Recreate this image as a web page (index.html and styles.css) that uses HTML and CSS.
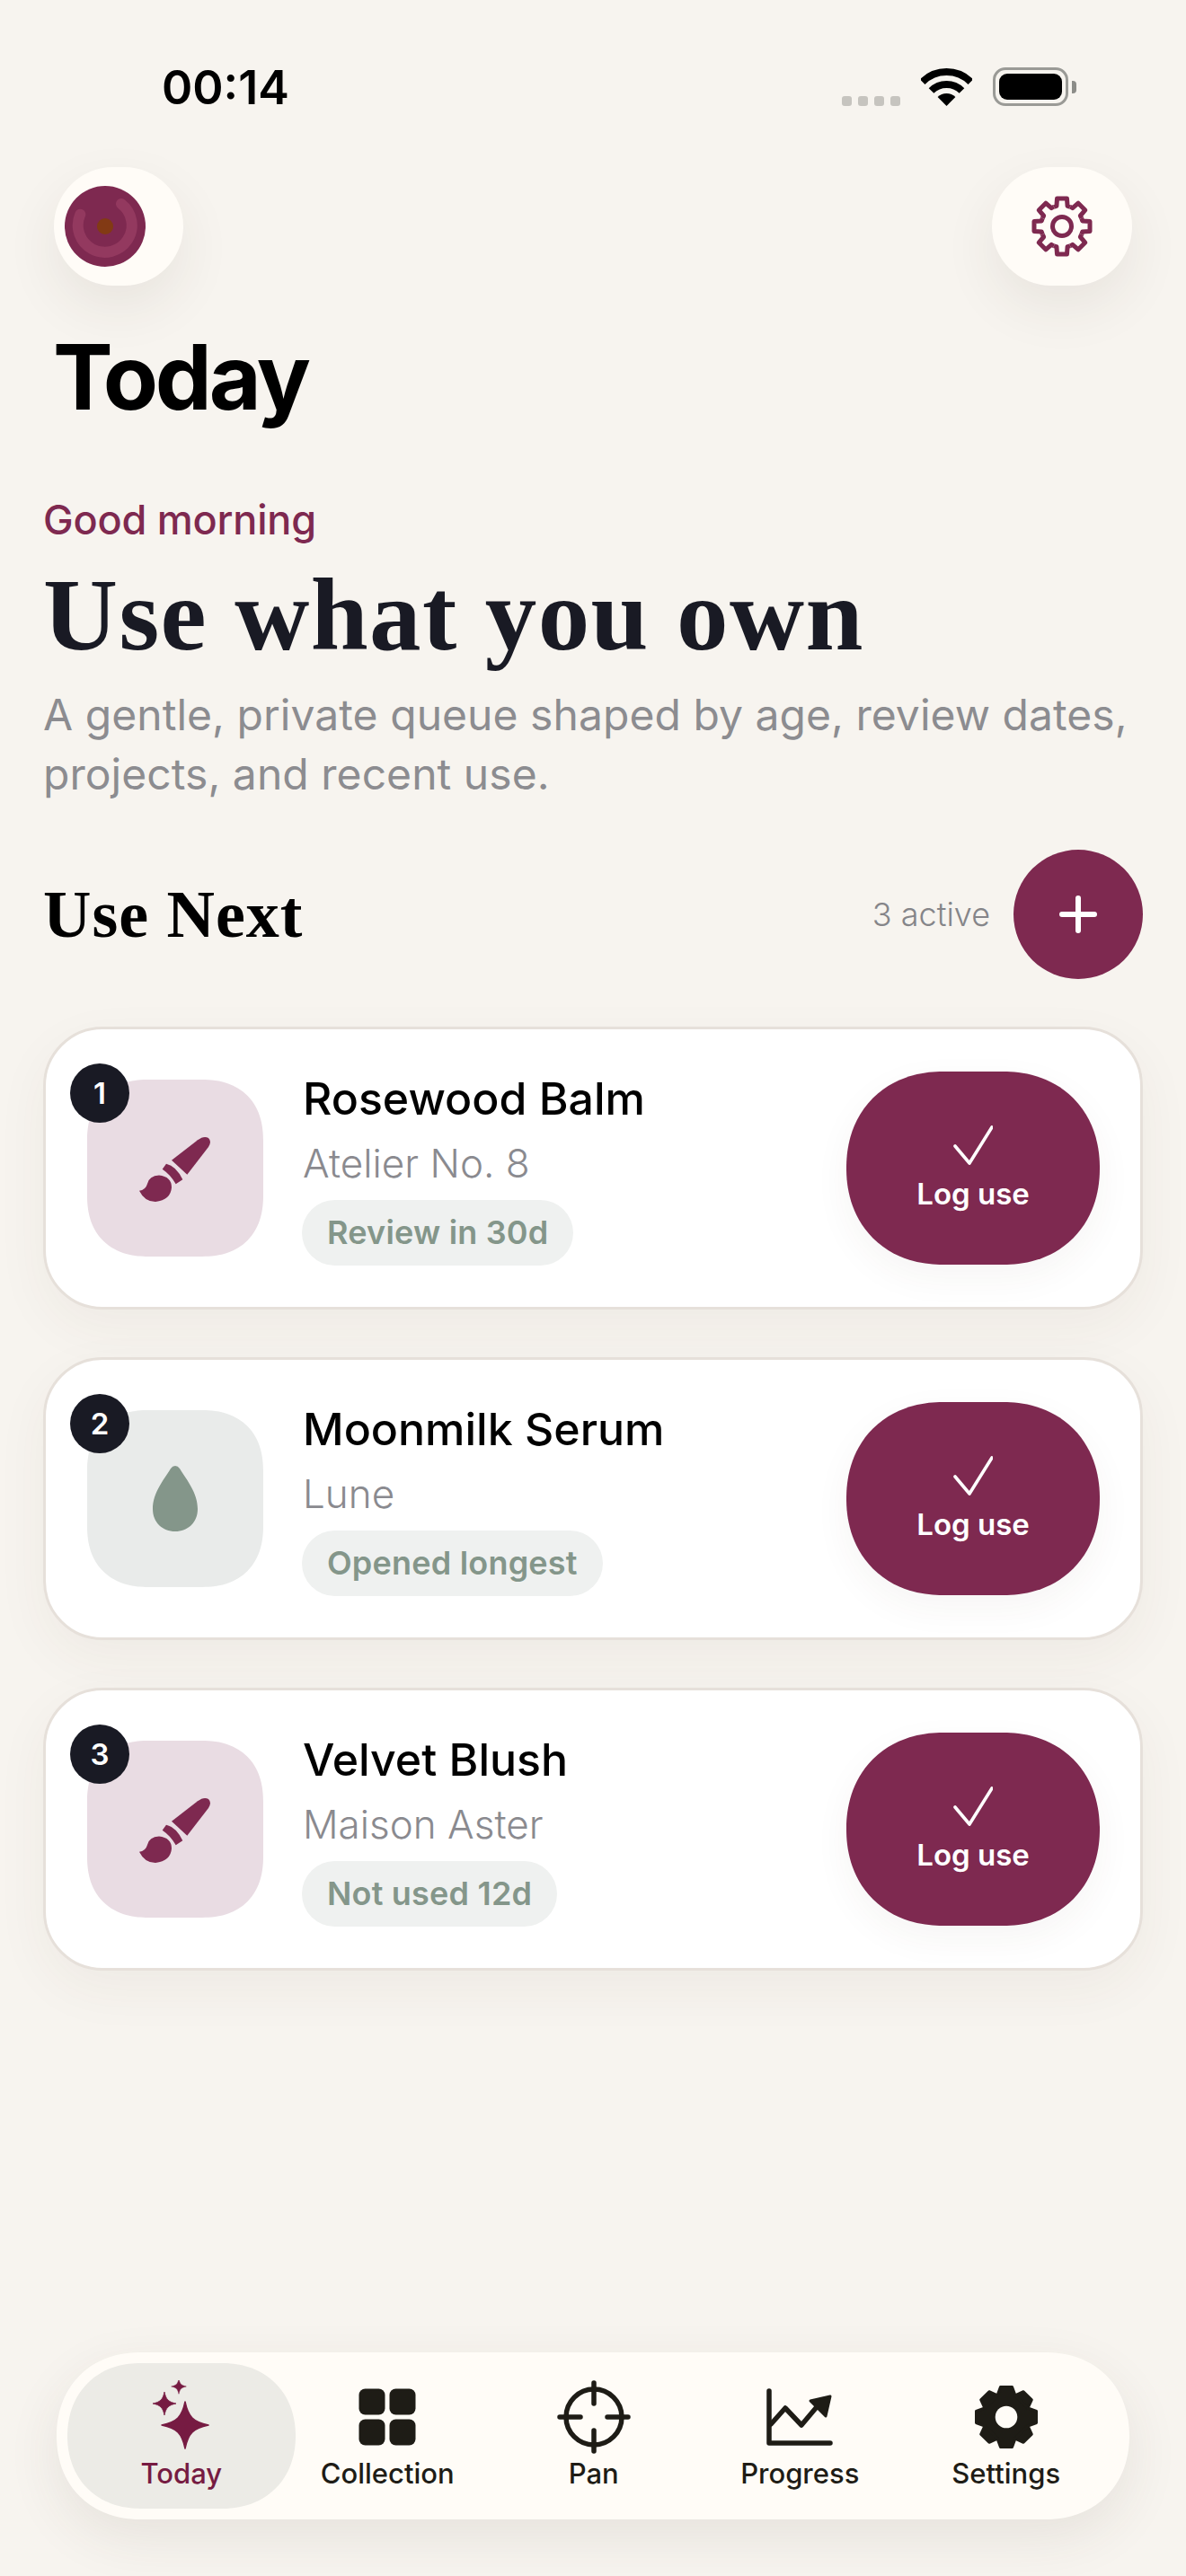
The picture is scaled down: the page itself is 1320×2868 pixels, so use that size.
FILE: index.html
```html
<!DOCTYPE html>
<html lang="en">
  <head>
    <meta charset="UTF-8" />
    <meta name="viewport" content="width=device-width, initial-scale=1.0" />
    <title>Today</title>
    <link rel="stylesheet" href="styles.css">
  </head>
  <body>
    <svg class="defs" width="0" height="0" aria-hidden="true">
      <defs>
        <path id="gear-seg" d="M-8.99-21.71A23.5 23.5 0 0 1-6.08-22.7L-5.47-31.02L5.47-31.02L6.08-22.7A23.5 23.5 0 0 1 8.99-21.71" />
        <path id="gear-tooth" d="M-10-24L-6.5-33.5L6.5-33.5L10-24Z" />
        <g id="brush">
          <path d="M61 61.7L90 39.3Q97 34 102 37Q106 41 102 47L78.3 77.7Z" />
          <path d="M50.7 71.7L55 65.7Q66 68 73.3 83.3L65.7 88.3Q60 78 50.7 71.7Z" />
          <path d="M25 95.7Q32 95 34 88Q36 79 47 78.5Q61 80 61 92Q60 106 43 108Q31 108 25 95.7Z" />
        </g>
        <path id="star" d="M0-26C3.5-9 9-3.5 26 0C9 3.5 3.5 9 0 26C-3.5 9-9 3.5-26 0C-9-3.5-3.5-9 0-26Z" />
      </defs>
    </svg>

    <div class="statusbar">
      <span class="time">00:14</span>
      <div class="status-icons">
        <div class="signal"><i></i><i></i><i></i><i></i></div>
        <svg class="wifi" viewBox="0 0 57 42" width="57" height="42">
          <path d="M1.63 15.13A38 38 0 0 1 55.37 15.13" fill="none" stroke="#000" stroke-width="8" />
          <path d="M11.53 25.03A24 24 0 0 1 45.47 25.03" fill="none" stroke="#000" stroke-width="8" />
          <path d="M28.5 42L18.6 32.1A14 14 0 0 1 38.4 32.1Z" fill="#000" />
        </svg>
        <div class="battery"><div class="battery-fill"></div></div>
        <div class="battery-nub"></div>
      </div>
    </div>

    <div class="topbar">
      <button class="round-btn avatar-btn" aria-label="Profile">
        <svg viewBox="0 0 90 90" width="90" height="90">
          <circle cx="45" cy="45" r="45" fill="#7e2950" />
          <path d="M17.3 31.7A30 30 0 1 0 63 20" fill="none" stroke="#93395f" stroke-width="12" stroke-linecap="round" />
          <circle cx="45" cy="45" r="9" fill="#823a14" />
        </svg>
      </button>
      <button class="round-btn settings-btn" aria-label="Settings">
        <svg class="gear-line" viewBox="-34 -34 68 68" width="68" height="68">
          <use href="#gear-seg" />
          <use href="#gear-seg" transform="rotate(45)" />
          <use href="#gear-seg" transform="rotate(90)" />
          <use href="#gear-seg" transform="rotate(135)" />
          <use href="#gear-seg" transform="rotate(180)" />
          <use href="#gear-seg" transform="rotate(225)" />
          <use href="#gear-seg" transform="rotate(270)" />
          <use href="#gear-seg" transform="rotate(315)" />
          <circle r="10.5" />
        </svg>
      </button>
    </div>

    <h1 class="page-title">Today</h1>

    <section class="hero">
      <p class="greeting">Good morning</p>
      <h2 class="headline">Use what you own</h2>
      <p class="subtext">A gentle, private queue shaped by age, review dates, projects, and recent use.</p>
    </section>

    <div class="section-head">
      <h3 class="section-title">Use Next</h3>
      <div class="section-side">
        <span class="count">3 active</span>
        <button class="add-btn" aria-label="Add">
          <svg viewBox="0 0 42 42" width="42" height="42">
            <path d="M21 3V39M3 21H39" fill="none" stroke="#fff" stroke-width="6" stroke-linecap="round" />
          </svg>
        </button>
      </div>
    </div>

    <div class="cards">
      <article class="card">
        <div class="tile tile-rose">
          <span class="rank">1</span>
          <svg viewBox="24 33 82 76" width="82" height="76"><use href="#brush" /></svg>
        </div>
        <div class="info">
          <div class="name">Rosewood Balm</div>
          <div class="brand">Atelier No. 8</div>
          <span class="chip">Review in 30d</span>
        </div>
        <button class="log-btn">
          <svg viewBox="0 0 44 44" width="44" height="44">
            <path d="M2 23L18 42L43 2" fill="none" stroke="#fff" stroke-width="3.6" stroke-linecap="round" stroke-linejoin="round" />
          </svg>
          <span>Log use</span>
        </button>
      </article>

      <article class="card">
        <div class="tile tile-sage">
          <span class="rank">2</span>
          <svg viewBox="0 0 50 73" width="50" height="73">
            <path d="M25 0Q28 0 30 3C38 16 50 30 50 48C50 63 39 73 25 73C11 73 0 63 0 48C0 30 12 16 20 3Q22 0 25 0Z" fill="#84968a" />
          </svg>
        </div>
        <div class="info">
          <div class="name">Moonmilk Serum</div>
          <div class="brand">Lune</div>
          <span class="chip">Opened longest</span>
        </div>
        <button class="log-btn">
          <svg viewBox="0 0 44 44" width="44" height="44">
            <path d="M2 23L18 42L43 2" fill="none" stroke="#fff" stroke-width="3.6" stroke-linecap="round" stroke-linejoin="round" />
          </svg>
          <span>Log use</span>
        </button>
      </article>

      <article class="card">
        <div class="tile tile-rose">
          <span class="rank">3</span>
          <svg viewBox="24 33 82 76" width="82" height="76"><use href="#brush" /></svg>
        </div>
        <div class="info">
          <div class="name">Velvet Blush</div>
          <div class="brand">Maison Aster</div>
          <span class="chip">Not used 12d</span>
        </div>
        <button class="log-btn">
          <svg viewBox="0 0 44 44" width="44" height="44">
            <path d="M2 23L18 42L43 2" fill="none" stroke="#fff" stroke-width="3.6" stroke-linecap="round" stroke-linejoin="round" />
          </svg>
          <span>Log use</span>
        </button>
      </article>
    </div>

    <nav class="tabbar">
      <a class="tab active">
        <svg class="tab-icon" viewBox="0 0 82 82" width="82" height="82" fill="#761b42" stroke="#761b42" stroke-width="1.5" stroke-linejoin="round">
          <use href="#star" transform="translate(45 50)" />
          <use href="#star" transform="translate(22 26) scale(.5)" />
          <use href="#star" transform="translate(38 7) scale(.32)" />
        </svg>
        <span>Today</span>
      </a>
      <a class="tab">
        <svg class="tab-icon" viewBox="0 0 82 82" width="82" height="82" fill="#1e1c16">
          <rect x="9.5" y="9.5" width="29" height="29" rx="7" />
          <rect x="43.5" y="9.5" width="29" height="29" rx="7" />
          <rect x="9.5" y="43.5" width="29" height="29" rx="7" />
          <rect x="43.5" y="43.5" width="29" height="29" rx="7" />
        </svg>
        <span>Collection</span>
      </a>
      <a class="tab">
        <svg class="tab-icon" viewBox="0 0 82 82" width="82" height="82" fill="none" stroke="#1e1c16" stroke-width="5.5" stroke-linecap="round">
          <circle cx="41" cy="41" r="31" />
          <path d="M41 3V26M41 56V79M3 41H26M56 41H79" />
        </svg>
        <span>Pan</span>
      </a>
      <a class="tab">
        <svg class="tab-icon" viewBox="-4 -9 82 82" width="82" height="82" fill="none" stroke="#1e1c16" stroke-width="5.5" stroke-linecap="round" stroke-linejoin="round">
          <path d="M3 3V61H71" />
          <path d="M5 40L21 22L39 41L55 22" />
          <path d="M49 14L71 9L66 31Z" fill="#1e1c16" stroke-width="3" />
        </svg>
        <span>Progress</span>
      </a>
      <a class="tab">
        <svg class="tab-icon" viewBox="-41 -41 82 82" width="82" height="82" fill="#1e1c16" stroke="#1e1c16" stroke-width="3" stroke-linejoin="round">
          <circle r="26" />
          <use href="#gear-tooth" />
          <use href="#gear-tooth" transform="rotate(45)" />
          <use href="#gear-tooth" transform="rotate(90)" />
          <use href="#gear-tooth" transform="rotate(135)" />
          <use href="#gear-tooth" transform="rotate(180)" />
          <use href="#gear-tooth" transform="rotate(225)" />
          <use href="#gear-tooth" transform="rotate(270)" />
          <use href="#gear-tooth" transform="rotate(315)" />
          <circle r="12.3" fill="#fffcf7" stroke="none" />
        </svg>
        <span>Settings</span>
      </a>
    </nav>
  </body>
</html>
```

FILE: styles.css
```css
* {
  box-sizing: border-box;
}
body {
  margin: 0;
  min-height: 2868px;
  display: flex;
  flex-direction: column;
  background-color: #f7f4ef;
  color: #000;
  font-family: Inter, "Liberation Sans", sans-serif;
}
button {
  border: none;
  padding: 0;
  font-family: inherit;
}
.defs {
  position: absolute;
}

/* status bar */
.statusbar {
  display: flex;
  justify-content: space-between;
  align-items: flex-end;
  padding: 72px 122px 0 180px;
}
.time {
  font-size: 52px;
  line-height: 52px;
  font-weight: 600;
}
.status-icons {
  display: flex;
  align-items: flex-end;
  margin-bottom: 6px;
}
.signal {
  display: flex;
  gap: 7px;
  margin-right: 23px;
}
.signal i {
  width: 11px;
  height: 11px;
  border-radius: 3px;
  background-color: #c6c4bf;
}
.wifi {
  margin-right: 23px;
}
.battery {
  width: 84px;
  height: 43px;
  padding: 4px;
  border: 3px solid #9a9a96;
  border-radius: 14px;
}
.battery-fill {
  height: 100%;
  background-color: #000;
  border-radius: 9px;
}
.battery-nub {
  width: 5px;
  height: 14px;
  margin: 0 0 14px 4px;
  background-color: #8c8c88;
  border-radius: 0 4px 4px 0;
}

/* top buttons */
.topbar {
  display: flex;
  justify-content: space-between;
  padding: 0 60px;
  margin-top: 62px;
}
.round-btn {
  height: 132px;
  display: flex;
  align-items: center;
  background-color: #fffcf7;
  border-radius: 66px;
  box-shadow: 0 24px 60px rgba(70, 55, 40, 0.08);
}
.avatar-btn {
  width: 144px;
  padding-left: 12px;
}
.settings-btn {
  width: 156px;
  justify-content: center;
}
.gear-line {
  fill: none;
  stroke: #7e2950;
  stroke-width: 5;
  stroke-linejoin: round;
}

.page-title {
  margin: 52px 0 0 59px;
  font-size: 100px;
  line-height: 100px;
  font-weight: 700;
  letter-spacing: -3.2px;
}

/* intro */
.hero {
  padding: 0 48px;
  margin-top: 81px;
}
.greeting {
  margin: 0;
  font-size: 45px;
  line-height: 56px;
  font-weight: 500;
  letter-spacing: -0.2px;
  color: #7e2950;
}
.headline {
  margin: 18px 0 0;
  font-family: "Liberation Serif", serif;
  font-size: 115px;
  line-height: 120px;
  font-weight: 700;
  letter-spacing: 1.4px;
  color: #191a24;
}
.subtext {
  margin: 18px 0 0;
  font-size: 48px;
  line-height: 66px;
  font-weight: 380;
  letter-spacing: 0.05px;
  color: #8c8c90;
}

.section-head {
  display: flex;
  justify-content: space-between;
  align-items: center;
  padding: 0 48px 0 48px;
  margin-top: 51px;
}
.section-title {
  margin: 0;
  font-family: "Liberation Serif", serif;
  font-size: 74px;
  line-height: 80px;
  font-weight: 700;
  letter-spacing: 1px;
}
.section-side {
  display: flex;
  align-items: center;
  gap: 26px;
}
.count {
  font-size: 36px;
  font-weight: 300;
  color: #858589;
}
.add-btn {
  width: 144px;
  height: 144px;
  display: flex;
  align-items: center;
  justify-content: center;
  background-color: #7e2950;
  border-radius: 50%;
}

/* cards */
.cards {
  display: flex;
  flex-direction: column;
  gap: 53px;
  margin: 53px 48px 0;
}
.card {
  height: 315px;
  display: flex;
  align-items: center;
  padding: 0 45px 0 46px;
  background-color: #fff;
  border: 3px solid #e6e0da;
  border-radius: 66px;
  box-shadow: 0 20px 60px rgba(70, 55, 40, 0.05);
}
.tile {
  position: relative;
  flex: none;
  width: 196px;
  height: 197px;
  display: flex;
  align-items: center;
  justify-content: center;
  border-radius: 68px;
  corner-shape: superellipse(1.2);
}
.tile-rose {
  background-color: #e9dce3;
  fill: #7e2950;
}
.tile-sage {
  background-color: #e9ebea;
}
.rank {
  position: absolute;
  left: -19px;
  top: -18px;
  width: 66px;
  height: 66px;
  display: flex;
  align-items: center;
  justify-content: center;
  background-color: #191a24;
  border-radius: 50%;
  corner-shape: round;
  color: #fff;
  font-size: 33px;
  font-weight: 600;
}
.info {
  flex: 1;
  margin-left: 43px;
}
.name {
  padding-left: 1px;
  margin-top: -2px;
  font-size: 50px;
  line-height: 64px;
  font-weight: 550;
}
.brand {
  padding-left: 1px;
  margin-top: 7px;
  font-size: 44px;
  line-height: 66px;
  font-weight: 330;
  color: #8a8a8f;
}
.chip {
  display: inline-block;
  margin-top: 8px;
  padding: 0 28px;
  font-size: 36px;
  line-height: 73px;
  font-weight: 600;
  letter-spacing: 0.2px;
  color: #84968a;
  background-color: #eff1f0;
  border-radius: 37px;
}
.log-btn {
  flex: none;
  width: 282px;
  height: 215px;
  display: flex;
  flex-direction: column;
  align-items: center;
  justify-content: center;
  gap: 12px;
  padding-top: 1px;
  background-color: #7e2950;
  border-radius: 107px;
  corner-shape: superellipse(1.1);
  color: #fff;
  font-size: 33px;
  font-weight: 600;
  box-shadow: 0 14px 40px rgba(70, 55, 40, 0.05);
}

/* bottom navigation */
.tabbar {
  display: grid;
  grid-template-columns: repeat(5, 229.5px);
  margin: auto 63px 63px;
  padding: 12px 24px;
  height: 186px;
  background-color: #fffcf7;
  border-radius: 93px;
  corner-shape: superellipse(1.1);
  box-shadow: 0 20px 60px rgba(70, 55, 40, 0.09);
}
.tab {
  display: flex;
  flex-direction: column;
  align-items: center;
  padding-top: 19px;
  color: #1e1c16;
  font-size: 31px;
  line-height: 36px;
  font-weight: 480;
}
.tab.active {
  margin: 0 -12px;
  background-color: #ecebe6;
  border-radius: 81px;
  corner-shape: superellipse(1.1);
  color: #761b42;
}
.tab-icon {
  margin-bottom: 4px;
}
```
